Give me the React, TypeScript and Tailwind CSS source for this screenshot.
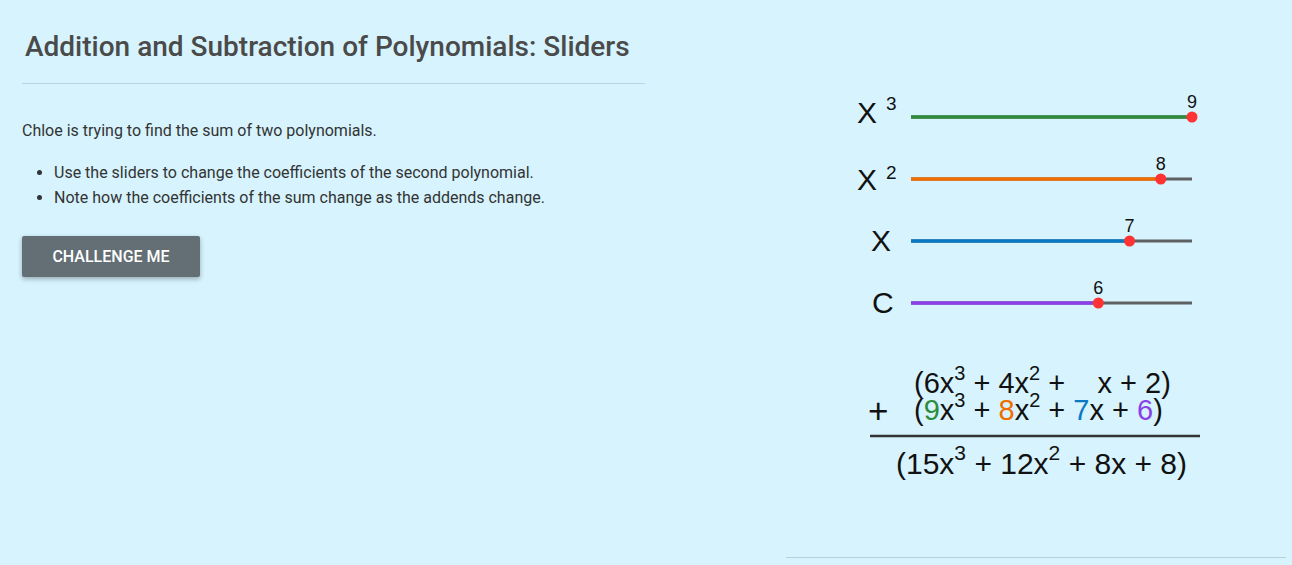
import React from "react";

const GREEN = "#2e8b3c";
const ORANGE = "#f06e00";
const BLUE = "#0a78c2";
const PURPLE = "#8a40e6";
const GRAY = "#5f6062";
const RED = "#ff3333";

const OX = 786; // page x of svg origin

function Slider({ y, value, color }: { y: number; value: number; color: string }) {
  const x0 = 911 - OX;
  const x1 = 1192 - OX;
  const px = x0 + ((x1 - x0) * value) / 9;
  return (
    <g>
      <line x1={x0} y1={y} x2={x1} y2={y} stroke={GRAY} strokeWidth={3} />
      <line x1={x0} y1={y} x2={px} y2={y} stroke={color} strokeWidth={3.5} />
      <circle cx={px} cy={y} r={5.5} fill={RED} />
      <text x={px} y={y - 9} textAnchor="middle" fontSize={18} fill="#111">
        {value}
      </text>
    </g>
  );
}

type Piece = { t: string; sup?: boolean; c?: string };

function MathLine({ x, y, size = 29, pieces }: { x: number; y: number; size?: number; pieces: Piece[] }) {
  let prevSup = false;
  const supSize = Math.round(size * 0.69);
  const shift = Math.round(size * 0.45);
  return (
    <text x={x} y={y} fontSize={size} fill="#111" className="whitespace-pre">
      {pieces.map((p, i) => {
        let dy = 0;
        if (p.sup && !prevSup) dy = -shift;
        if (!p.sup && prevSup) dy = shift;
        prevSup = !!p.sup;
        return (
          <tspan key={i} dy={dy} fontSize={p.sup ? supSize : size} fill={p.c ?? "#111"}>
            {p.t}
          </tspan>
        );
      })}
    </text>
  );
}

function Applet() {
  return (
    <svg width={500} height={556} viewBox="0 0 500 556" className="font-['Liberation_Sans',Arial,sans-serif]">
      {/* labels */}
      <text x={857 - OX} y={123} fontSize={30} fill="#111">X</text>
      <text x={886 - OX} y={110} fontSize={19} fill="#111">3</text>
      <text x={857 - OX} y={190} fontSize={30} fill="#111">X</text>
      <text x={886 - OX} y={179} fontSize={19} fill="#111">2</text>
      <text x={871 - OX} y={251} fontSize={30} fill="#111">X</text>
      <text x={872 - OX} y={313} fontSize={30} fill="#111">C</text>

      <Slider y={117} value={9} color={GREEN} />
      <Slider y={179} value={8} color={ORANGE} />
      <Slider y={241} value={7} color={BLUE} />
      <Slider y={303} value={6} color={PURPLE} />

      {/* equation */}
      <MathLine
        x={914 - OX}
        y={393}
        pieces={[
          { t: "(6x" },
          { t: "3", sup: true },
          { t: " + 4x" },
          { t: "2", sup: true },
          { t: " +    x + 2)" },
        ]}
      />
      <text x={868 - OX} y={423} fontSize={35} fill="#111">+</text>
      <MathLine
        x={914 - OX}
        y={420}
        pieces={[
          { t: "(" },
          { t: "9", c: GREEN },
          { t: "x" },
          { t: "3", sup: true },
          { t: " + " },
          { t: "8", c: ORANGE },
          { t: "x" },
          { t: "2", sup: true },
          { t: " + " },
          { t: "7", c: BLUE },
          { t: "x + " },
          { t: "6", c: PURPLE },
          { t: ")" },
        ]}
      />
      <line x1={870 - OX} y1={436} x2={1200 - OX} y2={436} stroke="#333" strokeWidth={2.5} />
      <MathLine
        x={896 - OX}
        y={474}
        size={30}
        pieces={[
          { t: "(15x" },
          { t: "3", sup: true },
          { t: " + 12x" },
          { t: "2", sup: true },
          { t: " + 8x + 8)" },
        ]}
      />
    </svg>
  );
}

export default function App() {
  return (
    <div className="w-[1292px] h-[565px] bg-[#d6f3fe] flex overflow-hidden font-['Roboto','Liberation_Sans',Arial,sans-serif]">
      <div className="w-[645px] pl-[22px] pt-[30px] shrink-0">
        <h1 className="text-[28px] leading-[34px] font-medium text-[#4a4a4a] pl-[3px]">
          Addition and Subtraction of Polynomials: Sliders
        </h1>
        <div className="mt-[19px] border-t border-[#b5d6e2]" />
        <p className="mt-[36px] text-[16px] leading-[22px] text-[#333]">
          Chloe is trying to find the sum of two polynomials.
        </p>
        <ul className="mt-[18px] pl-[32px] list-disc text-[16px] leading-[25px] text-[#333]">
          <li>Use the sliders to change the coefficients of the second polynomial.</li>
          <li>Note how the coefficients of the sum change as the addends change.</li>
        </ul>
        <button className="mt-[26px] w-[178px] h-[41px] bg-[#636f74] rounded-[2px] text-white text-[16px] font-medium uppercase shadow-[0_2px_5px_rgba(0,0,0,0.3)]">
          Challenge me
        </button>
      </div>
      <div className="ml-[141px] w-[500px] h-[558px] border-b border-[#b8cdd6]">
        <Applet />
      </div>
    </div>
  );
}
